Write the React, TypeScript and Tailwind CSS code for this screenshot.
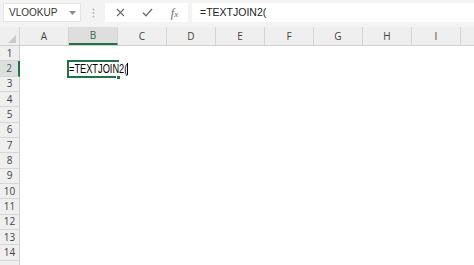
import React from "react";

const cols = ["A", "B", "C", "D", "E", "F", "G", "H", "I"];
const rows = Array.from({ length: 14 }, (_, i) => i + 1);

export default function App() {
  return (
    <div className="relative w-[474px] h-[265px] overflow-hidden bg-white font-['Open_Sans','Liberation_Sans',sans-serif]">
      {/* Formula bar */}
      <div className="h-[27px] bg-[#f3f3f3] flex items-start pt-[3px]">
        <div className="ml-[3px] w-[78px] h-[19px] bg-white border border-[#e4e4e4] flex items-center justify-between pl-[5px] pr-[4px]">
          <span className="text-[10px] leading-none text-[#333] font-['Liberation_Sans',sans-serif]">VLOOKUP</span>
          <svg width="7" height="4" viewBox="0 0 7 4">
            <path d="M0 0 L7 0 L3.5 4 Z" fill="#8a8a8a" />
          </svg>
        </div>
        <div className="w-[24px] h-[19px] flex items-center justify-center">
          <svg width="3" height="10" viewBox="0 0 3 10">
            <circle cx="1.5" cy="1.5" r="0.9" fill="#b5b5b5" />
            <circle cx="1.5" cy="5" r="0.9" fill="#b5b5b5" />
            <circle cx="1.5" cy="8.5" r="0.9" fill="#b5b5b5" />
          </svg>
        </div>
        <div className="w-[83px] h-[19px] bg-white flex items-center pl-[2px]">
          <div className="w-[27px] flex justify-center">
            <svg width="9" height="9" viewBox="0 0 9 9">
              <path d="M1 1 L8 8 M8 1 L1 8" stroke="#6b6b6b" strokeWidth="1.1" />
            </svg>
          </div>
          <div className="w-[27px] flex justify-center">
            <svg width="11" height="9" viewBox="0 0 11 9">
              <path d="M1 4.8 L4 7.8 L10 1" stroke="#6b6b6b" strokeWidth="1.3" fill="none" />
            </svg>
          </div>
          <div className="w-[27px] flex justify-center">
            <span className="font-['Liberation_Serif',serif] italic text-[12px] leading-none text-[#6b6b6b]">
              f<span className="text-[9px]">x</span>
            </span>
          </div>
        </div>
        <div className="ml-[4px] flex-1 h-[19px] bg-white flex items-center pl-[8px]">
          <span className="text-[10.5px] leading-none text-[#222] font-['Liberation_Sans',sans-serif]">=TEXTJOIN2(</span>
        </div>
      </div>

      {/* Column headers */}
      <div className="flex h-[19px] bg-[#efefef] border-b border-[#cfcfcf]">
        <div className="w-[20px] h-full border-r border-[#d4d4d4] flex items-end justify-end pr-[3px] pb-[2px]">
          <svg width="8" height="8" viewBox="0 0 8 8">
            <path d="M8 0 L8 8 L0 8 Z" fill="#c9c9c9" />
          </svg>
        </div>
        {cols.map((c) => (
          <div
            key={c}
            className={
              c === "B"
                ? "w-[49px] h-full flex items-center justify-center border-r border-[#d4d4d4] bg-[#dedede] border-b-2 border-b-[#217346] text-[#2e6b48] text-[10px]"
                : "w-[49px] h-full flex items-center justify-center border-r border-[#d4d4d4] text-[#444] text-[10px]"
            }
          >
            {c}
          </div>
        ))}
        <div className="flex-1 h-full" />
      </div>

      {/* Rows */}
      {rows.map((r) => (
        <div key={r} className="flex h-[15.35px]">
          <div
            className={
              r === 2
                ? "w-[20px] h-full bg-[#dedede] border-r-2 border-[#217346] border-b border-b-[#d6d6d6] flex items-center justify-center text-[10px] text-[#2e6b48]"
                : "w-[20px] h-full bg-[#efefef] border-r border-[#cfcfcf] border-b border-b-[#d6d6d6] flex items-center justify-center text-[10px] text-[#444]"
            }
          >
            {r}
          </div>
          <div className="flex-1 h-full" />
        </div>
      ))}
      <div className="flex h-[15.35px]">
        <div className="w-[20px] h-full bg-[#efefef] border-r border-[#cfcfcf]" />
        <div className="flex-1 h-full" />
      </div>

      {/* Active cell */}
      <div className="absolute left-[67px] top-[60px] w-[52px] h-[18px] border-2 border-[#217346]" />
      <div className="absolute left-[116px] top-[75px] w-[5px] h-[5px] bg-[#217346] border border-white" />
      <div className="absolute left-[69px] top-[62px] h-[13px] w-[58px] bg-white flex items-center">
        <span className="origin-left scale-x-[0.77] whitespace-nowrap text-[12px] leading-none text-black font-['Liberation_Sans',sans-serif]">
          =TEXTJOIN2(
        </span>
      </div>
      <div className="absolute left-[127px] top-[63px] w-[1px] h-[12px] bg-black" />
    </div>
  );
}
